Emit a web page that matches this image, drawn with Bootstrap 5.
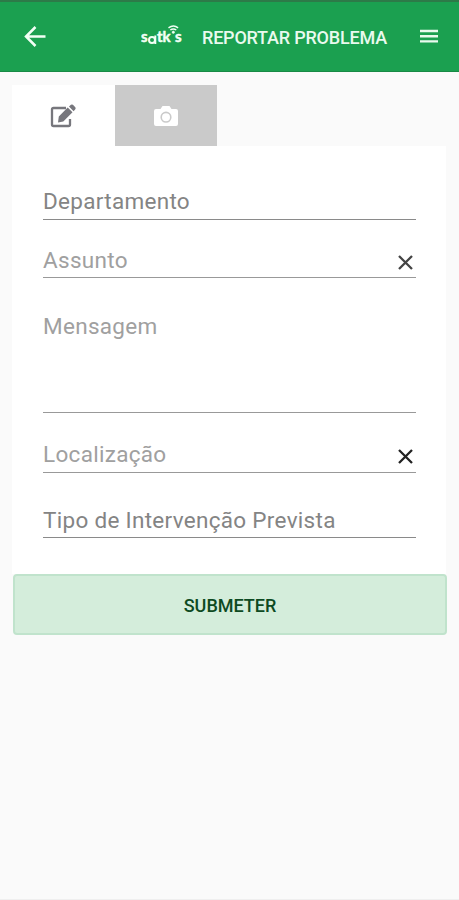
<!DOCTYPE html>
<html lang="pt">
<head>
<meta charset="utf-8">
<meta name="viewport" content="width=device-width, initial-scale=1">
<title>Reportar Problema</title>
<link href="https://cdn.jsdelivr.net/npm/bootstrap@5.3.0/dist/css/bootstrap.min.css" rel="stylesheet">
<style>
body{background:#fafafa;font-family:Roboto,"Liberation Sans",sans-serif;min-height:900px;border-bottom:1px solid #efefef}
.topbar{height:72px;background:#1ba050;border-top:2px solid #2d7a48;border-bottom:1px solid #188a45;padding:0 20px 0 23px}
.brand{width:42px;height:24px;margin-right:19px}
.page-title{font-size:18px;font-weight:500;line-height:24px;color:#e9faee;letter-spacing:-.2px;width:188px;margin-right:29px;padding-top:2px;white-space:nowrap}
.panel{margin:13px 13px 0 12px}
.tab-item{width:102px;height:61px;border:0}
.tab-item:first-child{width:102.5px}
.tab-photo{background:#cacaca}
.form-panel{height:428px;padding:0 30px 0 31px}
.field{border-bottom:1.5px solid #999;font-size:22.5px;line-height:26px;color:#848484;letter-spacing:.3px;padding-bottom:4px}
.hint{color:#a0a0a0}
.f1{height:74px;border-color:#8a8a8a;padding-bottom:5px}
.f2{height:58px}
.f3{height:135px;padding-top:35px}
.f4{height:60px;padding-bottom:5px}
.f5{height:65px;border-color:#8a8a8a}
.clear-btn{width:22px;height:22px}
.submit-btn{height:61px;margin:0 12px 0 13px;background:#d4eddb;border:2px solid #c0e3cc;border-radius:4px;font-size:18px;font-weight:500;color:#0d4a22;letter-spacing:0;padding-top:7px;padding-bottom:5px}
.submit-btn:hover{background:#c7e6d0}
</style>
<script src="https://cdn.jsdelivr.net/npm/bootstrap@5.3.0/dist/js/bootstrap.bundle.min.js"></script>
</head>
<body>
<header class="topbar d-flex align-items-center">
  <svg class="me-auto" width="24" height="24" viewBox="0 0 24 24" fill="none" stroke="#f2fff5" stroke-width="2.500"><path d="M12.500 2 3 11.500l9.500 9.500M3 11.500h19.500"/></svg>
  <svg class="brand" viewBox="0 0 42 24" fill="#f2fff5" stroke="#f2fff5" stroke-width=".5" font-family="Lato,sans-serif" font-weight="700" font-size="15">
    <text x="0" y="16.500">s</text><circle cx="11" cy="15" r="3" fill="none" stroke-width="2"/><path d="M14.300 10.500v8.500" fill="none" stroke-width="2"/><text x="16" y="16.500">t</text><text x="21.500" y="16.500">k</text><text x="34" y="16.500">s</text>
    <path d="M27.500 2.800q5-3.400 9.600 0M29.300 5q3-2.200 6 0" fill="none" stroke-width="1.500"/><circle cx="32.300" cy="7.200" r="1.200"/>
  </svg>
  <div class="page-title">REPORTAR PROBLEMA</div>
  <svg width="20" height="16" viewBox="0 0 20 16" stroke="#e9faee" stroke-width="2.400"><path d="M1 2h18M1 7.200h18M1 12.400h18"/></svg>
</header>
<main>
  <section class="panel">
    <nav class="d-flex">
      <div class="tab-item bg-white d-flex align-items-center justify-content-center">
        <svg width="28" height="26" viewBox="0 0 28 26"><path d="M17 5H4.500Q3 5 3 6.500V21.500Q3 23 4.500 23H19.500Q21 23 21 21.500V16" fill="none" stroke="#77777d" stroke-width="2.300"/><path d="m9 19.500.8-6L18.700 4.500l4.800 4.800-9.200 9.200zM20 3.500l1.900-1.700q1-.8 2 0l2.400 2.400q.8 1 0 2L24.600 8.200z" fill="#77777d"/></svg>
      </div>
      <div class="tab-item tab-photo d-flex align-items-center justify-content-center">
        <svg width="26" height="22" viewBox="0 0 26 22"><path d="M3 4h4.500L9.500 1h7l2 3H23q2 0 2 2v13q0 2-2 2H3q-2 0-2-2V6q0-2 2-2z" fill="#fff"/><circle cx="13" cy="12.200" r="4.800" fill="none" stroke="#cacaca" stroke-width="1.600"/></svg>
      </div>
    </nav>
    <div class="form-panel bg-white">
      <div class="field f1 d-flex align-items-end">Departamento</div>
      <div class="field hint f2 d-flex align-items-end justify-content-between"><span>Assunto</span><svg class="clear-btn" viewBox="0 0 22 22" stroke="#444" stroke-width="2.300"><path d="m5 5 13 13m0-13-13 13"/></svg></div>
      <div class="field hint f3">Mensagem</div>
      <div class="field hint f4 d-flex align-items-end justify-content-between"><span>Localização</span><svg class="clear-btn" viewBox="0 0 22 22" stroke="#222" stroke-width="2.300"><path d="m5 5 13 13m0-13-13 13"/></svg></div>
      <div class="field f5 d-flex align-items-end">Tipo de Intervenção Prevista</div>
    </div>
  </section>
  <div class="d-grid"><button type="button" class="btn submit-btn">SUBMETER</button></div>
</main>
</body>
</html>
